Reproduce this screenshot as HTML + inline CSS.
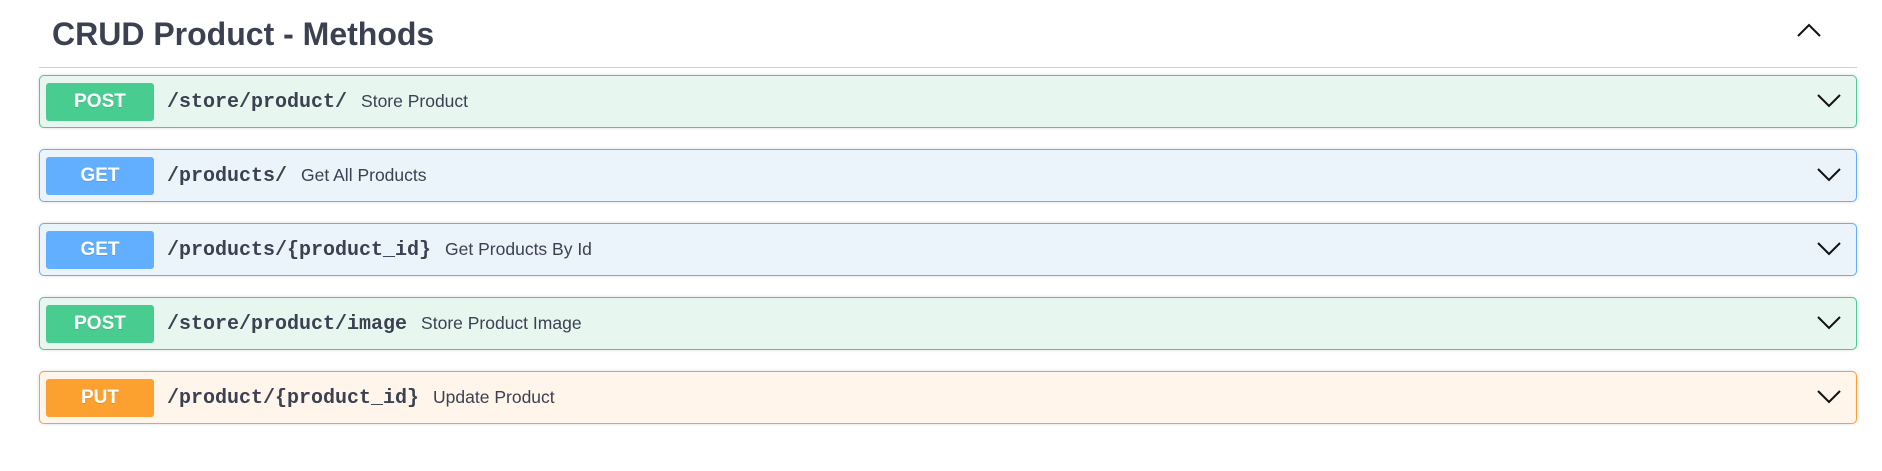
<!DOCTYPE html>
<html><head><meta charset="utf-8"><style>
body{margin:0;background:#fff;width:1882px;height:471px;overflow:hidden;font-family:"Liberation Sans",sans-serif;position:relative}
h2{position:absolute;left:52px;top:14px;margin:0;font-size:32px;font-weight:bold;color:#3b4151;line-height:40px}
.line{position:absolute;left:39px;top:67px;width:1818px;height:1px;background:#cfcfcf}
.up{position:absolute;left:1796px;top:22px}
.op{position:absolute;left:39px;width:1816px;height:51px;border:1px solid;border-radius:5px;box-shadow:0 0 3px rgba(0,0,0,.15);box-sizing:content-box}
.b{position:absolute;left:6px;top:7px;width:108px;height:38px;border-radius:3px;color:#fff;font-weight:bold;font-size:19px;text-align:center;line-height:38px;text-shadow:0 1px 0 rgba(0,0,0,.1)}
.p{position:absolute;left:127px;top:0;line-height:51px;font-family:"Liberation Mono",monospace;font-weight:bold;font-size:20px;color:#3b4151;white-space:nowrap}
.p span{font-family:"Liberation Sans",sans-serif;font-weight:normal;font-size:17.5px;margin-left:14px}
.dn{position:absolute;left:1776px;top:17px}
.post{border-color:#49cc90;background:#e8f6f0}.post .b{background:#49cc90}
.get{border-color:#61affe;background:#ebf3fb}.get .b{background:#61affe}
.put{border-color:#fca130;background:#fff5ea}.put .b{background:#fca130}
</style></head><body>
<h2>CRUD Product - Methods</h2>
<svg class="up" width="26" height="16" viewBox="0 0 26 16"><path d="M2 14 L13 3 L24 14" fill="none" stroke="#111" stroke-width="2"/></svg>
<div class="line"></div>
<div class="op post" style="top:75px"><div class="b">POST</div><div class="p">/store/product/<span>Store Product</span></div><svg class="dn" width="26" height="16" viewBox="0 0 26 16"><path d="M2 2 L13 13 L24 2" fill="none" stroke="#111" stroke-width="2"/></svg></div>
<div class="op get" style="top:149px"><div class="b">GET</div><div class="p">/products/<span>Get All Products</span></div><svg class="dn" width="26" height="16" viewBox="0 0 26 16"><path d="M2 2 L13 13 L24 2" fill="none" stroke="#111" stroke-width="2"/></svg></div>
<div class="op get" style="top:223px"><div class="b">GET</div><div class="p">/products/{product_id}<span>Get Products By Id</span></div><svg class="dn" width="26" height="16" viewBox="0 0 26 16"><path d="M2 2 L13 13 L24 2" fill="none" stroke="#111" stroke-width="2"/></svg></div>
<div class="op post" style="top:297px"><div class="b">POST</div><div class="p">/store/product/image<span>Store Product Image</span></div><svg class="dn" width="26" height="16" viewBox="0 0 26 16"><path d="M2 2 L13 13 L24 2" fill="none" stroke="#111" stroke-width="2"/></svg></div>
<div class="op put" style="top:371px"><div class="b">PUT</div><div class="p">/product/{product_id}<span>Update Product</span></div><svg class="dn" width="26" height="16" viewBox="0 0 26 16"><path d="M2 2 L13 13 L24 2" fill="none" stroke="#111" stroke-width="2"/></svg></div>
</body></html>
